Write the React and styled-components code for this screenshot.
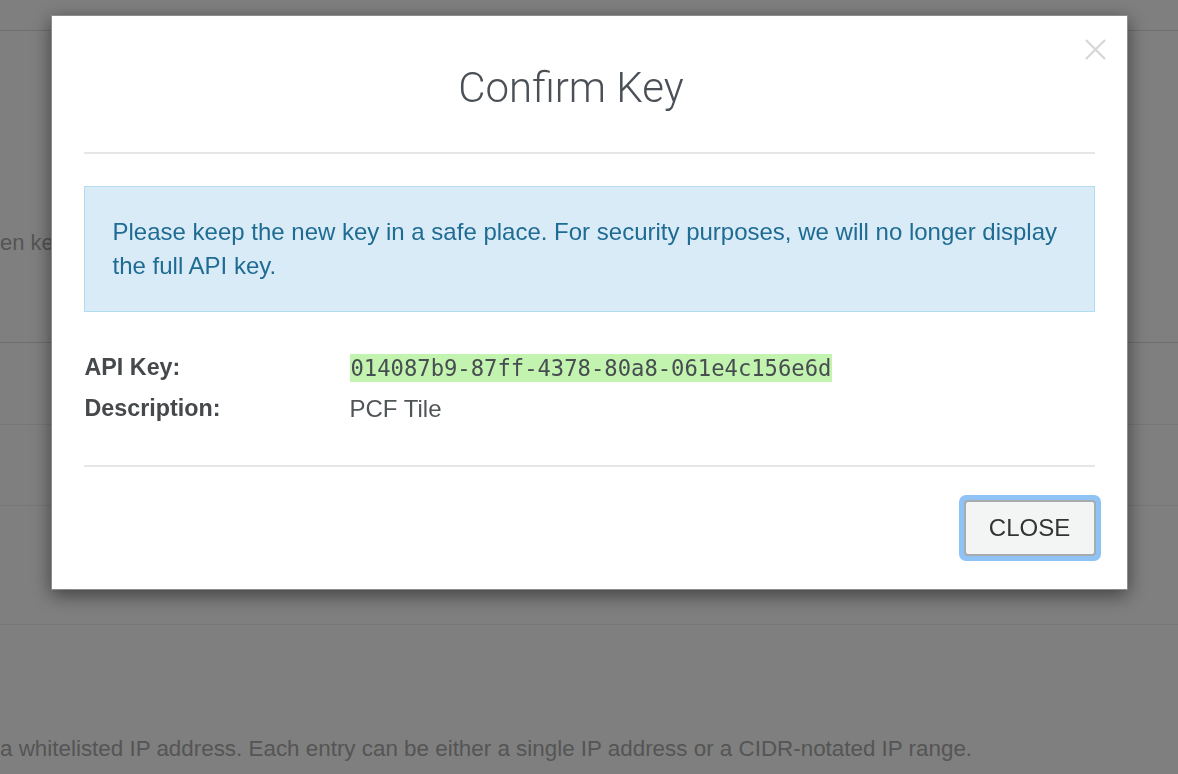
import React from "react";
import styled, { createGlobalStyle } from "styled-components";

const GlobalStyle = createGlobalStyle`
  html, body {
    margin: 0;
    padding: 0;
    background: #ffffff;
    font-family: "Liberation Sans", Arial, sans-serif;
  }
  * { box-sizing: border-box; }
`;

const Page = styled.div`
  width: 1178px;
  height: 774px;
  overflow: hidden;
  background: #ffffff;
`;

const TopBar = styled.div`
  height: 31px;
  border-bottom: 1px solid #dedede;
`;

const Intro = styled.div`
  height: 312px;
  display: flex;
  align-items: center;
  padding-top: 112px;
  font-size: 22px;
  color: #aaaaaa;
  border-bottom: 1px solid #dcdcdc;
`;

const ListRow = styled.div`
  height: ${(p) => p.h}px;
  border-bottom: 1px solid #eeeeee;
`;

const Footnote = styled.div`
  padding-top: 112px;
  font-size: 22.4px;
  color: #aaaaaa;
  line-height: 24px;
  white-space: nowrap;
`;

const Backdrop = styled.div`
  position: fixed;
  inset: 0;
  background: rgba(0, 0, 0, 0.5);
  display: flex;
  justify-content: center;
  align-items: flex-start;
`;

const Modal = styled.div`
  position: relative;
  margin-top: 15px;
  margin-left: 0;
  width: 1077px;
  background: #ffffff;
  border: 1px solid rgba(0, 0, 0, 0.45);
  box-shadow: 0 5px 18px rgba(0, 0, 0, 0.5);
  padding: 0 32px;
`;

const Header = styled.div`
  padding: 48px 36px 40px 0;
  border-bottom: 2px solid #e6e6e6;
  display: flex;
  justify-content: center;
`;

const Title = styled.h2`
  margin: 0;
  font-family: Roboto, "Liberation Sans", sans-serif;
  font-weight: 300;
  font-size: 42px;
  line-height: 48px;
  color: #4a5056;
`;

const CloseIcon = styled.button`
  position: absolute;
  top: 22px;
  right: 20px;
  width: 23px;
  height: 23px;
  padding: 0;
  border: none;
  background: transparent;
  display: flex;
  cursor: pointer;
`;

const Body = styled.div`
  padding: 32px 0 36px;
  border-bottom: 2px solid #e6e6e6;
`;

const Notice = styled.div`
  background: #d9ebf6;
  border: 1px solid #b2dcf0;
  padding: 28px 28px 28px 28px;
  font-size: 24px;
  line-height: 34px;
  color: #1e6b93;
`;

const Details = styled.div`
  margin-top: 35px;
  display: grid;
  grid-template-columns: 266px 1fr;
  grid-auto-rows: 41px;
  align-items: center;
`;

const Label = styled.div`
  font-weight: bold;
  font-size: 23.3px;
  color: #45494c;
  padding-left: 1px;
`;

const Value = styled.div`
  font-size: 24px;
  color: #505558;
`;

const KeyText = styled.span`
  font-family: "DejaVu Sans Mono", "Liberation Mono", monospace;
  font-size: 22.2px;
  line-height: 28px;
  display: inline-block;
  padding: 0 1px;
  background: #c2f4b0;
  color: #474d50;
`;

const Footer = styled.div`
  padding: 28px 0 28px;
  display: flex;
  justify-content: flex-end;
`;

const Button = styled.button`
  width: 142px;
  height: 66px;
  margin-right: -6px;
  padding: 0;
  border: 5px solid #8fc3f6;
  border-radius: 7px;
  background: #8fc3f6;
  cursor: pointer;
`;

const ButtonFace = styled.span`
  display: flex;
  align-items: center;
  justify-content: center;
  width: 100%;
  height: 100%;
  border: 2px solid #a6abae;
  border-radius: 4px;
  background: #f3f5f4;
  font-family: "Liberation Sans", Arial, sans-serif;
  font-size: 24px;
  color: #333333;
`;

export default function App() {
  return (
    <>
      <GlobalStyle />
      <Page>
        <TopBar />
        <Intro>en key</Intro>
        <ListRow h={82} />
        <ListRow h={81} />
        <ListRow h={119} />
        <Footnote>
          a whitelisted IP address. Each entry can be either a single IP address or a CIDR-notated IP range.
        </Footnote>
      </Page>
      <Backdrop>
        <Modal>
          <CloseIcon aria-label="Close">
            <svg width="23" height="23" viewBox="0 0 23 23">
              <path d="M2 2 L21 21 M21 2 L2 21" stroke="#d6d6d6" strokeWidth="2.2" />
            </svg>
          </CloseIcon>
          <Header>
            <Title>Confirm Key</Title>
          </Header>
          <Body>
            <Notice>
              Please keep the new key in a safe place. For security purposes, we will no longer display the full API key.
            </Notice>
            <Details>
              <Label>API Key:</Label>
              <Value>
                <KeyText>014087b9-87ff-4378-80a8-061e4c156e6d</KeyText>
              </Value>
              <Label>Description:</Label>
              <Value>PCF Tile</Value>
            </Details>
          </Body>
          <Footer>
            <Button>
              <ButtonFace>CLOSE</ButtonFace>
            </Button>
          </Footer>
        </Modal>
      </Backdrop>
    </>
  );
}
